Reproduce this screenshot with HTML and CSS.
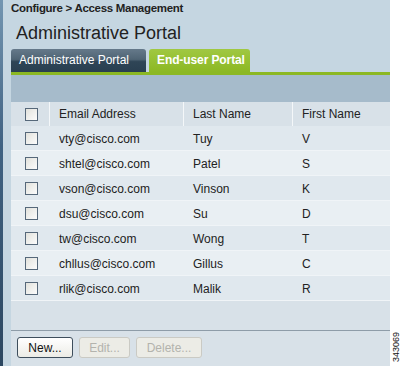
FILE: index.html
```html
<!DOCTYPE html>
<html lang="en">
<head>
    <meta charset="UTF-8">
    <title>Access Management</title>
    <link rel="stylesheet" href="styles.css">
</head>
<body>
    <div class="page">
        <div class="frame">
            <div class="edge"></div>
            <div class="panel">
                <div class="crumb">Configure &gt; Access Management</div>
                <h1 class="title">Administrative Portal</h1>

                <div class="tabs">
                    <a class="tab tab-admin" href="#admin">Administrative Portal</a>
                    <a class="tab tab-user active" href="#enduser">End-user Portal</a>
                </div>

                <div class="content">
                    <div class="toolbar"></div>
                    <table class="users">
                        <colgroup>
                            <col class="col-check">
                            <col class="col-email">
                            <col class="col-last">
                            <col class="col-first">
                        </colgroup>
                        <thead>
                            <tr>
                                <th class="check"><span class="box"></span></th>
                                <th>Email Address</th>
                                <th>Last Name</th>
                                <th>First Name</th>
                            </tr>
                        </thead>
                        <tbody>
                            <tr><td class="check"><span class="box"></span></td><td>vty@cisco.com</td><td>Tuy</td><td>V</td></tr>
                            <tr><td class="check"><span class="box"></span></td><td>shtel@cisco.com</td><td>Patel</td><td>S</td></tr>
                            <tr><td class="check"><span class="box"></span></td><td>vson@cisco.com</td><td>Vinson</td><td>K</td></tr>
                            <tr><td class="check"><span class="box"></span></td><td>dsu@cisco.com</td><td>Su</td><td>D</td></tr>
                            <tr><td class="check"><span class="box"></span></td><td>tw@cisco.com</td><td>Wong</td><td>T</td></tr>
                            <tr><td class="check"><span class="box"></span></td><td>chllus@cisco.com</td><td>Gillus</td><td>C</td></tr>
                            <tr><td class="check"><span class="box"></span></td><td>rlik@cisco.com</td><td>Malik</td><td>R</td></tr>
                        </tbody>
                    </table>
                    <div class="spacer"></div>
                    <div class="actions">
                        <button class="btn btn-new">New...</button>
                        <button class="btn btn-edit" disabled>Edit...</button>
                        <button class="btn btn-delete" disabled>Delete...</button>
                    </div>
                </div>
            </div>
        </div>
        <div class="figure-id"><span>343069</span></div>
    </div>
</body>
</html>
```

FILE: styles.css
```css
body {
    margin: 0;
    padding: 0;
    background: #fff;
    font-family: "Liberation Sans", Arial, sans-serif;
    color: #222;
}

.page {
    display: flex;
    width: 402px;
    height: 366px;
    overflow: hidden;
}

.frame {
    width: 390px;
    height: 366px;
    display: flex;
    background: #c5d6e1;
}

/* Thin dark strip on the left edge */
.edge {
    width: 3px;
    background: linear-gradient(#7496b1, #3f6282 40%, #2c4760);
}

.panel {
    flex: 1;
    display: flex;
    flex-direction: column;
    padding-left: 8px;
    min-width: 0;
}

.crumb {
    font-size: 11.5px;
    font-weight: 700;
    line-height: 14px;
    padding-top: 1px;
    letter-spacing: -0.3px;
}

.title {
    font-size: 18px;
    font-weight: 400;
    line-height: 21px;
    margin: 8px 0 0 5px;
}

/* Tabs */
.tabs {
    display: flex;
    gap: 3px;
    margin-top: 5px;
    height: 23px;
    border-bottom: 3px solid #8cb823;
}

.tab {
    display: block;
    box-sizing: border-box;
    height: 23px;
    line-height: 23px;
    padding: 0 0 0 8px;
    font-size: 12px;
    color: #fff;
    white-space: nowrap;
    text-decoration: none;
    border-radius: 3px 3px 0 0;
    background: linear-gradient(#65798a, #4f6474 45%, #2f4556 55%, #2a3f50);
}

.tab-admin {
    width: 135px;
}

.tab-user {
    width: 101px;
}

.tab.active {
    font-weight: 700;
    letter-spacing: -0.1px;
    background: linear-gradient(#a0c842, #8cb823);
}

/* Table area */
.content {
    flex: 1;
    display: flex;
    flex-direction: column;
    background: #d8e1e8;
}

.toolbar {
    height: 27px;
    background: #a6bbcb;
}

.users {
    width: 100%;
    border-collapse: collapse;
    table-layout: fixed;
    font-size: 12px;
}

.col-check {
    width: 38px;
}

.col-email {
    width: 134px;
}

.col-last {
    width: 109px;
}

.users th,
.users td {
    padding: 0 0 0 10px;
    text-align: left;
    white-space: nowrap;
    overflow: hidden;
}

.users th {
    height: 24px;
    font-weight: 400;
    background: #d8e1e8;
    box-shadow: inset 1px 0 #f4f7f9;
}

.users th.check {
    box-shadow: none;
}

.users td {
    height: 25px;
    box-shadow: inset 0 -1px #f0f4f7;
}

.users tbody tr:nth-child(odd) td {
    background: #e0e8ee;
}

.users tbody tr:nth-child(even) td {
    background: #e9eff3;
}

.users .check {
    padding-left: 14px;
    line-height: 0;
}

.box {
    display: inline-block;
    width: 11px;
    height: 11px;
    border: 1px solid #56687a;
    background: linear-gradient(135deg, #e2e2dc, #fcfcfc);
}

.spacer {
    flex: 1;
    border-bottom: 1px solid #8e9ca8;
}

.actions {
    display: flex;
    gap: 6px;
    padding: 6px 0 8px 6px;
}

.btn {
    box-sizing: border-box;
    height: 21px;
    padding: 0;
    font-family: "Liberation Sans", Arial, sans-serif;
    font-size: 12px;
    color: #111;
    border: 1px solid #3e4e5c;
    border-radius: 3px;
    background: linear-gradient(#ffffff, #ecece6);
}

.btn-new {
    width: 56px;
}

.btn-edit {
    width: 51px;
}

.btn-delete {
    width: 66px;
}

.btn:disabled {
    color: #b3b3ad;
    border-color: #cacac4;
    background: #ecece6;
}

/* Figure number on the right edge */
.figure-id {
    flex: 1;
    display: flex;
    align-items: flex-end;
    justify-content: center;
    padding-bottom: 4px;
}

.figure-id span {
    writing-mode: vertical-rl;
    transform: rotate(180deg);
    font-size: 9px;
    line-height: 9px;
    color: #111;
}
```
